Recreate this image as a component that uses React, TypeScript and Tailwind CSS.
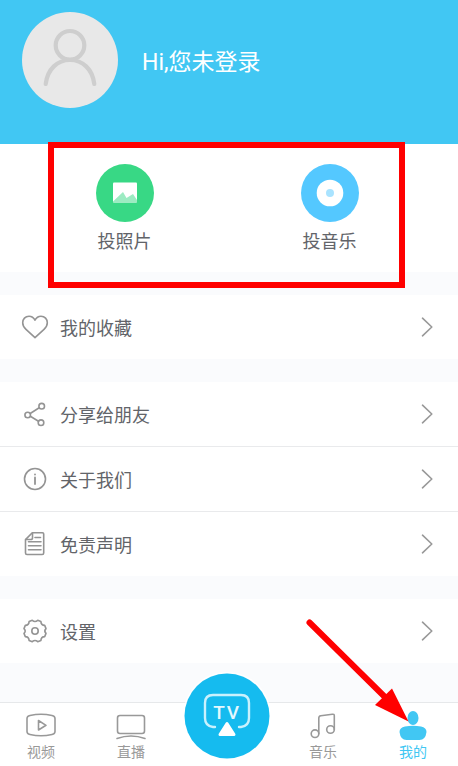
import type { ReactNode } from "react";

const stroke = {
  fill: "none",
  stroke: "currentColor",
  strokeWidth: 1.6,
  strokeLinecap: "round",
  strokeLinejoin: "round",
} as const;

function RowIcon({ children }: { children: ReactNode }) {
  return (
    <svg viewBox="0 0 30 30" className="w-[30px] h-[30px] text-[#949494]" {...stroke} aria-hidden="true">
      {children}
    </svg>
  );
}

const HeartIcon = () => (
  <RowIcon>
    <path d="M15 8.2C13.6 5.4 11.4 4.2 9 4.2c-3.8 0-6.3 3-6.3 6.500 0 3 1.500 5 3.300 6.700L15 25.600l9-8.200c1.800-1.700 3.300-3.700 3.300-6.700 0-3.500-2.500-6.500-6.300-6.500-2.400 0-4.600 1.200-6 4z" />
  </RowIcon>
);

const ShareIcon = () => (
  <RowIcon>
    <circle cx="21.7" cy="7.2" r="2.8" />
    <circle cx="7.7" cy="16" r="2.8" />
    <circle cx="21" cy="23.7" r="2.8" />
    <path d="M10.2 14.5l9-5.7M10.3 17.3l8.2 5" />
  </RowIcon>
);

const InfoIcon = () => (
  <RowIcon>
    <circle cx="15" cy="15" r="10.5" />
    <path d="M15 13.5v6.5M15 10.3v.2" strokeWidth="1.8" />
  </RowIcon>
);

const DocIcon = () => (
  <RowIcon>
    <path d="M12.3 3.7H22.5a1.2 1.2 0 0 1 1.2 1.2V24a1.5 1.5 0 0 1-1.5 1.5H7A1.5 1.5 0 0 1 5.5 24V10.6z" />
    <path d="M12.5 4v5a1.5 1.5 0 0 1-1.5 1.5H6M15 8.5h5.5M8.5 12.7h12.5M8.5 16.7h12.5M8.5 20.7h12.5" />
  </RowIcon>
);

const GearIcon = () => (
  <RowIcon>
    <path d="M12.3 4.3q2.7 2.4 5.4 0l3.2 1.3q.2 3.6 3.8 3.8l1.3 3.2q-2.4 2.4 0 4.8l-1.3 3.2q-3.6.2-3.8 3.8l-3.2 1.3q-2.7-2.4-5.4 0l-3.2-1.3q-.2-3.6-3.8-3.8L4 17.4q2.4-2.4 0-4.8l1.3-3.2q3.6-.2 3.8-3.8z" />
    <circle cx="15" cy="15" r="3.2" />
  </RowIcon>
);

function Row({ icon, label }: { icon: ReactNode; label: string }) {
  return (
    <button className="w-full h-16 pl-5 pr-[25px] flex items-center gap-2.5 bg-white text-left">
      {icon}
      <span className="flex-1 pt-1 text-lg leading-6">{label}</span>
      <svg viewBox="0 0 12 20" className="w-3 h-5 text-[#999]" {...stroke} aria-hidden="true">
        <path d="M1.5 1.2L10.8 10 1.5 18.8" />
      </svg>
    </button>
  );
}

function Cast({ label, children }: { label: string; children: ReactNode }) {
  return (
    <button className="flex flex-col items-center gap-2">
      <svg viewBox="0 0 58 58" className="w-[58px] h-[58px]" aria-hidden="true">
        {children}
      </svg>
      <span className="text-lg leading-6">{label}</span>
    </button>
  );
}

function Tab({ label, active = false, children }: { label: string; active?: boolean; children: ReactNode }) {
  return (
    <a
      href="#"
      className={`flex flex-col items-center pt-2 ${active ? "text-[#41c7f3]" : "text-[#999]"}`}
    >
      <svg viewBox="0 0 32 30" className="w-8 h-[30px]" {...stroke} aria-hidden="true">
        {children}
      </svg>
      <span className="text-sm leading-[22px]">{label}</span>
    </a>
  );
}

export default function App() {
  return (
    <div className="min-h-screen flex flex-col bg-[#fafbfd] text-[#626469] font-[Roboto,'Noto_Sans_CJK_SC',sans-serif]">
      <header className="h-36 px-[22px] pt-3 flex items-start gap-6 bg-[#41c7f3]">
        <svg viewBox="0 0 96 96" className="w-24 h-24" aria-hidden="true">
          <circle cx="48" cy="48" r="48" fill="#e8e8e8" />
          <g fill="none" stroke="#cecece" strokeWidth="4.2" strokeLinecap="round">
            <circle cx="48" cy="33.3" r="14.3" />
            <path d="M23.7 72C25.5 57 35.5 48 48 48s22.5 9 24.3 24" />
          </g>
        </svg>
        <h1 className="h-24 pt-1.5 flex items-center text-[23px] text-white">Hi,您未登录</h1>
      </header>

      <section className="relative h-32 pl-[22px] pr-[26px] pt-5 grid grid-cols-2 items-start bg-white">
        <Cast label="投照片">
          <circle cx="29" cy="29" r="29" fill="#38d885" />
          <rect x="17" y="18.5" width="24" height="20" rx="1" fill="#fff" />
          <path d="M17 37.5L27 28l3.5 6 6.5-4 4 6v2.5H17z" fill="#9cebc2" />
        </Cast>
        <Cast label="投音乐">
          <circle cx="29" cy="29" r="29" fill="#54c8ff" />
          <circle cx="29" cy="29" r="13.3" fill="#fff" />
          <circle cx="29" cy="29" r="4" fill="#a9e3ff" />
        </Cast>
        <div className="pointer-events-none absolute z-10 left-12 right-[53px] -top-0.5 h-[146px] border-6 border-[#f00]" />
      </section>

      <main className="pt-[23px] flex flex-col gap-[23px]">
        <Row icon={<HeartIcon />} label="我的收藏" />
        <div className="flex flex-col gap-px bg-[#e9eaec]">
          <Row icon={<ShareIcon />} label="分享给朋友" />
          <Row icon={<InfoIcon />} label="关于我们" />
          <Row icon={<DocIcon />} label="免责声明" />
        </div>
        <Row icon={<GearIcon />} label="设置" />
      </main>

      <nav className="relative mt-auto h-16 pr-1 grid grid-cols-[82fr_98fr_94fr_98fr_82fr] border-t border-[#e6e8ea] bg-white">
        <Tab label="视频">
          <path d="M5 4.5q11-2.6 22 0 3 .7 3 3v13q0 2.3-3 3-11 2.6-22 0-3-.7-3-3v-13q0-2.3 3-3z" />
          <path d="M13.5 9.5v9.5l7.5-4.7z" />
        </Tab>
        <Tab label="直播">
          <rect x="2.5" y="4.5" width="27" height="18" rx="2.5" />
          <path d="M2 27.5q14-5 28 0" />
        </Tab>
        <a href="#" aria-label="TV" className="-mt-[30px] justify-self-center self-start rounded-full ring-1 ring-white">
          <svg viewBox="0 0 86 86" className="w-[86px] h-[86px]" aria-hidden="true">
            <circle cx="43" cy="43" r="42.5" fill="#15bbef" />
            <path
              d="M31 54h-2q-8-1-8-9V30q0-8 8-8h28q8 0 8 8v15q0 8-8 9h-2"
              fill="none"
              stroke="#c9f1fd"
              strokeWidth="2.4"
              strokeLinecap="round"
            />
            <g fill="#e4f8fe" fontSize="19" fontWeight="500" textAnchor="middle">
              <text x="35" y="45.5">T</text>
              <text x="49" y="45.5">V</text>
            </g>
            <path d="M43 50.5l7 11H36z" fill="#fff" stroke="#fff" strokeWidth="3" strokeLinejoin="round" />
          </svg>
        </a>
        <Tab label="音乐">
          <circle cx="8" cy="22.7" r="3.8" />
          <circle cx="23.5" cy="18.5" r="3.8" />
          <path d="M11.8 22.7V7q0-2 2-2.3l11.5-1.5q2-.2 2 1.5v13.8" />
        </Tab>
        <Tab label="我的" active>
          <ellipse cx="16" cy="7" rx="5.5" ry="7" fill="currentColor" stroke="none" />
          <path d="M8 15.5q8-1.500 16 0 5.500 1 5.500 5.500-1 8-7 8H9.500q-6 0-7-8 0-4.500 5.500-5.500z" fill="currentColor" stroke="none" />
        </Tab>
        <svg
          viewBox="0 0 106 106"
          className="pointer-events-none absolute z-10 right-[47px] bottom-[42px] w-[106px] h-[106px]"
          aria-hidden="true"
        >
          <path d="M4.5 4.5L85 84" stroke="#f00" strokeWidth="6" strokeLinecap="round" />
          <path d="M87 70.5L70 87l33.500 16.500z" fill="#f00" />
        </svg>
      </nav>
    </div>
  );
}
